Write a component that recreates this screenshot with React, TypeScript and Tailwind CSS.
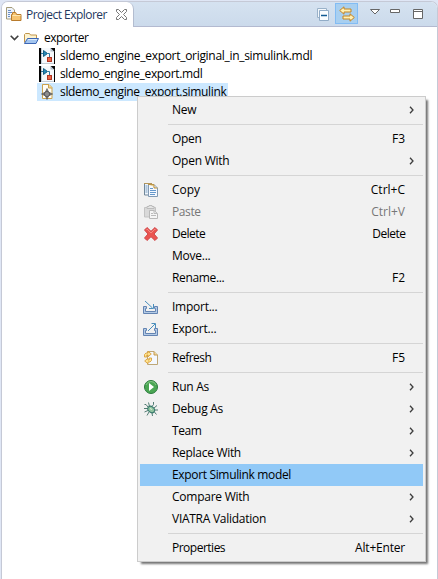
import React from "react";

type IconProps = { className?: string };

function Svg({ children, className = "" }: { children: React.ReactNode; className?: string }) {
  return (
    <svg width="16" height="16" viewBox="0 0 16 16" fill="none" className={`block shrink-0 ${className}`}>
      {children}
    </svg>
  );
}

function ExplorerIcon({ className }: IconProps) {
  return (
    <Svg className={className}>
      <path d="M.5.5H6L8.5 3v9h-8z" fill="#eef3fb" stroke="#a49a78" />
      <path d="M2 3.5h3M2 5.5h4M2 7.5h2M2 9.5h2" stroke="#6c90c6" />
      <path d="M5.5 13.5V7.5h1V5.5h3.2l1 2h4.3v6z" fill="#f6c470" stroke="#b87b2c" />
      <path d="M6.5 8.5h8" stroke="#fde7b0" />
    </Svg>
  );
}

function FolderIcon() {
  return (
    <Svg>
      <path d="M1.5 12.5v-8l1-1h4l1 1.5h6v3" fill="#fdf3cf" stroke="#c0954c" />
      <path d="M1.5 13.5 4.5 8.5h11l-2.5 5z" fill="#a3c5ef" stroke="#3b66b5" />
      <path d="M5 9.5h9" stroke="#dcebfb" />
    </Svg>
  );
}

function ModelIcon() {
  return (
    <Svg>
      <rect width="16" height="16" fill="#050505" />
      <path d="M2 0h9.5L15 3.5V16H2z" fill="#f5f8fb" />
      <path d="M11.5 0v3.5H15z" fill="#aebbc9" />
      <path d="M2.5 0v16M2 15.5h13" stroke="#c4ced8" />
      <path d="M2 5.5h2M9 5.5h1.5V9" stroke="#30779e" />
      <path d="m4.5 2.5 4 3-4 3z" fill="#2789b7" stroke="#176085" />
      <rect x="8.5" y="9.5" width="4" height="4" fill="#ed6543" stroke="#ae3423" />
    </Svg>
  );
}

function SimulinkIcon() {
  return (
    <Svg>
      <path d="M3.5.5h6.5l3 3v11h-9.5z" fill="#fffdf4" stroke="#cba14d" />
      <path d="M9.5.5v3.5h3.5" fill="#f3d996" stroke="#cba14d" />
      <path d="m8 4.5 1.6 3.6 4 1.9-4 1.9L8 15.5l-1.6-3.6-4-1.9 4-1.9z" fill="#777" stroke="#555" strokeWidth=".6" />
      <circle cx="8" cy="10" r="2.6" fill="#8e8e8e" stroke="#555" strokeWidth=".9" />
    </Svg>
  );
}

function CopyIcon() {
  return (
    <Svg>
      <path d="M1.5 1.5H8v11.500H1.5z" fill="#edf4fb" stroke="#70879a" />
      <path d="M1 1.5h8" stroke="#b3955a" />
      <path d="M2.500 4h2M2.500 6h2M2.500 8h2M2.500 10h2" stroke="#7398bd" />
      <path d="M5.500 2.500h5.500l3.500 3.500v8.500h-9z" fill="#f5f9ff" stroke="#829ab3" />
      <path d="M5 2.500h6v3.500h3.500" fill="#e8cd8e" stroke="#bb9448" />
      <path d="M7 6.500h3M7 8.500h6M7 10.500h6M7 12.500h5" stroke="#6598cb" />
    </Svg>
  );
}

function PasteIcon() {
  return (
    <Svg>
      <path d="M1.500 3.500h11v9.500h-11z" fill="#d9d9d9" stroke="#c3c3c3" />
      <path d="M4 4.500V2.500h2v-1h3v1h2v2z" fill="#e5e5e5" stroke="#bcbcbc" />
      <path d="M6.500 6.500H11l3.500 3v5h-8z" fill="#f5f5f5" stroke="#b8b8b8" />
      <path d="M8 9.500h2M8 11.500h5M11 7v2.500h3" stroke="#bbb" />
    </Svg>
  );
}

function DeleteIcon() {
  return (
    <Svg>
      <path d="m4 1.500 4 3.800 4-3.800 2.500 2.500-3.500 4 3.500 4-2.500 2.500-4-3.800-4 3.800L1.500 12 5 8 1.500 4z" fill="#ea5450" stroke="#d0474a" strokeLinejoin="round" />
      <path d="m3.500 3.500.5-.5 4 4 4-4 .5.500" stroke="#f58a82" />
    </Svg>
  );
}

function TransferIcon({ out = false }: { out?: boolean }) {
  return (
    <Svg>
      <path d="M.500 7.500h3v2h-1v3h10v-3h-1v-2h3v7H.500z" fill="#b4cbe6" stroke="#6484b2" />
      {out ? (
        <path d="m5 10 7-7M8.500 2.500h4V7" stroke="#4a8fbd" />
      ) : (
        <path d="m2 2 7.500 7M10.500 5v4.500H6" stroke="#4a8fbd" />
      )}
    </Svg>
  );
}

function RefreshIcon() {
  return (
    <Svg>
      <path d="M4.500 1.500h6.500l3.500 3.500v9.500h-10z" fill="#f4f8ff" stroke="#bda777" />
      <path d="M11 1.500V5h3.500" fill="#f2da9e" stroke="#c49a50" />
      <path d="M1.500 7V4.500l1.500-1.500h2V1.200L8.300 4 5 6.800V5H3.800v2z" fill="#ffe38f" stroke="#d9a03c" strokeWidth=".9" />
      <path d="M8.500 8v2.500L7 12H5v1.800L1.700 11 5 8.200V10h1.200V8z" fill="#ffe38f" stroke="#d9a03c" strokeWidth=".9" />
    </Svg>
  );
}

function RunIcon() {
  return (
    <Svg>
      <circle cx="8" cy="8" r="6.500" fill="#4aa653" stroke="#2a7b3c" />
      <path d="M3 6a5.300 5.300 0 0 1 10 0" stroke="#83c584" />
      <path d="m6 4 5 4-5 4z" fill="#fff" />
    </Svg>
  );
}

function DebugIcon() {
  return (
    <Svg>
      <path d="M5 6 3 3.500H1.500M6.500 5.500 5.500 1.500M9 5.500l1.500-2V1M11 7l3-2.500M11.500 9H15M11 10.500l2.500 3M9 12l.5 3M6 11l-2 3.500M5 9.500 1.500 11M5 7.500H1" stroke="#416e64" strokeWidth=".9" />
      <ellipse cx="8.200" cy="8.500" rx="3.700" ry="2.800" transform="rotate(40 8.200 8.500)" fill="#91c4a0" stroke="#35776a" />
      <path d="m7 7.500 2 1" stroke="#e0f5d5" />
    </Svg>
  );
}

function CloseIcon() {
  return (
    <svg width="11" height="11" viewBox="0 0 11 11" className="block shrink-0">
      <path d="M.5.5h2l3 3 3-3h2v2l-3 3 3 3v2h-2l-3-3-3 3h-2v-2l3-3-3-3z" fill="#fff" stroke="#777" />
    </svg>
  );
}

function CollapseIcon() {
  return (
    <Svg>
      <path d="M2.500 11.500v-9h9v9z" fill="#f4f8fc" stroke="#9ab2c9" />
      <path d="M4.500 4.500h9v10h-9z" fill="#fafdff" stroke="#91acc7" />
      <path d="M6 9.500h6" stroke="#125b94" strokeWidth="1.300" />
    </Svg>
  );
}

function LinkIcon() {
  return (
    <Svg>
      <path d="M.700 4.500 5 .800v2.200h7v3H5v2.200zM15.300 11.500 11 7.800V10H4v3h7v2.200z" fill="#fff0b4" stroke="#c38423" strokeLinejoin="round" />
    </Svg>
  );
}

function Chevron() {
  return (
    <svg width="6" height="8" viewBox="0 0 6 8" fill="none" className="block">
      <path d="m1 .7 3 3.300-3 3.300" stroke="#3d3d3d" strokeWidth="1.300" />
    </svg>
  );
}

type Item = {
  label: string;
  tracking?: string;
  icon?: React.ReactNode;
  shortcut?: string;
  sub?: boolean;
  disabled?: boolean;
  active?: boolean;
};

const groups: Item[][] = [
  [{ label: "New", sub: true }],
  [
    { label: "Open", shortcut: "F3", tracking: "tracking-[-0.3px]" },
    { label: "Open With", sub: true },
  ],
  [
    { label: "Copy", icon: <CopyIcon />, shortcut: "Ctrl+C", tracking: "tracking-normal" },
    { label: "Paste", icon: <PasteIcon />, shortcut: "Ctrl+V", disabled: true, tracking: "tracking-[-0.4px]" },
    { label: "Delete", icon: <DeleteIcon />, shortcut: "Delete", tracking: "tracking-[-0.5px]" },
    { label: "Move..." },
    { label: "Rename...", shortcut: "F2", tracking: "tracking-[-0.35px]" },
  ],
  [
    { label: "Import...", icon: <TransferIcon /> },
    { label: "Export...", icon: <TransferIcon out />, tracking: "tracking-[-0.2px]" },
  ],
  [{ label: "Refresh", icon: <RefreshIcon />, shortcut: "F5", tracking: "tracking-[-0.5px]" }],
  [
    { label: "Run As", icon: <RunIcon />, sub: true },
    { label: "Debug As", icon: <DebugIcon />, sub: true },
    { label: "Team", sub: true, tracking: "tracking-[-0.4px]" },
    { label: "Replace With", sub: true, tracking: "tracking-[-0.3px]" },
    { label: "Export Simulink model", active: true, tracking: "tracking-[-0.34px]" },
    { label: "Compare With", sub: true },
    { label: "VIATRA Validation", sub: true, tracking: "tracking-[-0.27px]" },
  ],
  [{ label: "Properties", shortcut: "Alt+Enter", tracking: "tracking-[-0.5px]" }],
];

const shortcutTracking: Record<string, string> = {
  Delete: "tracking-[-0.5px] mr-[17.500px]",
  "Alt+Enter": "tracking-[-0.2px] mr-[18px]",
};

function MenuRow({ item }: { item: Item }) {
  return (
    <div className={`flex h-[22px] items-center ${item.active ? "bg-[#91c9f7]" : ""} ${item.disabled ? "text-[#777]" : ""}`}>
      <div className="flex w-8 shrink-0 pl-[3px]">{item.icon}</div>
      <span className={`leading-[22px] ${item.tracking ?? "tracking-[-0.25px]"}`}>{item.label}</span>
      {item.shortcut && (
        <span className={`ml-auto leading-[22px] ${shortcutTracking[item.shortcut] ?? "mr-[18px]"}`}>{item.shortcut}</span>
      )}
      {item.sub && (
        <div className="ml-auto mr-[8px]">
          <Chevron />
        </div>
      )}
    </div>
  );
}

function ContextMenu() {
  return (
    <div className="absolute left-[137px] top-[96px] w-[289px] border border-[#ccc] bg-[#f1f1f1] p-[2px] shadow-[3px_3px_2px_-1px_rgba(0,0,0,0.55)]">
      {groups.map((group, index) => (
        <React.Fragment key={index}>
          {index > 0 && (
            <div className="ml-7 h-[7px] pt-[3px]">
              <div className="h-px bg-[#d5d5d5]" />
            </div>
          )}
          {group.map((item) => (
            <MenuRow key={item.label} item={item} />
          ))}
        </React.Fragment>
      ))}
    </div>
  );
}

export default function App() {
  return (
    <div className="relative h-[579px] w-[438px] overflow-hidden bg-[#dfe6f5] pl-px pt-px font-['Open_Sans','Noto_Sans',sans-serif] text-[12px] text-black">
      <div className="flex h-[578px] w-[437px] flex-col overflow-hidden rounded-t-[7px] border-x border-t border-[#c5c9d6] bg-white">
        <header className="flex h-[25px] shrink-0 bg-linear-to-b from-[#d5e2f0] to-[#cbdaeb]">
          <div className="flex w-[132px] items-center rounded-tr-[7px] border-r border-[#b3bdd0] bg-white pl-1">
            <ExplorerIcon />
            <span className="ml-[4px] w-[90px] shrink-0 whitespace-nowrap leading-[24px] tracking-[-0.53px] text-[#24385e]">Project Explorer</span>
            <CloseIcon />
          </div>
          <div className="flex flex-1 border-b border-[#b3bad0]">
            <div className="ml-[181px] mt-[4px]">
              <CollapseIcon />
            </div>
            <div className="ml-[4px] mt-px flex h-[21px] w-[23px] shrink-0 items-center justify-center border border-[#82bcf4] bg-[#a8cff0]">
              <LinkIcon />
            </div>
            <svg width="60" height="20" viewBox="0 0 60 20" fill="none" className="ml-[9px] shrink-0">
              <path d="M3.500 7.500h9l-4.500 4.500zM23.500 7.500h9v3h-9zM46.500 7.500h9v9h-9zM46.500 9.500h9" fill="#fff" stroke="#666" />
            </svg>
          </div>
        </header>
        <main className="pt-[2px]">
          <div className="flex h-[18px] items-center pl-2">
            <svg width="9" height="6" viewBox="0 0 9 6" fill="none">
              <path d="m.7.8 3.800 3.800L8.300.800" stroke="#404040" strokeWidth="1.600" />
            </svg>
            <div className="ml-[4px]">
              <FolderIcon />
            </div>
            <span className="ml-[5px] tracking-[-0.5px]">exporter</span>
          </div>
          <div className="flex h-[18px] items-center pl-[37px]">
            <ModelIcon />
            <span className="ml-[5px] tracking-[-0.3px]">sldemo_engine_export_original_in_simulink.mdl</span>
          </div>
          <div className="flex h-[18px] items-center pl-[37px]">
            <ModelIcon />
            <span className="ml-[5px] tracking-[-0.35px]">sldemo_engine_export.mdl</span>
          </div>
          <div className="ml-[35px] flex h-[18px] w-[191px] items-center bg-[#cce8ff] pl-[2px]">
            <SimulinkIcon />
            <span className="ml-[5px] tracking-[-0.34px]">sldemo_engine_export.simulink</span>
          </div>
        </main>
      </div>
      <ContextMenu />
    </div>
  );
}
